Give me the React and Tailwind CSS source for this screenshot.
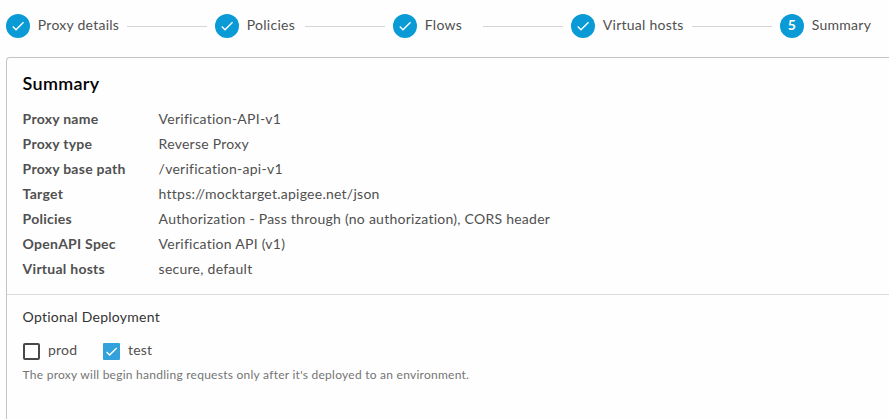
const steps = [
  { label: 'Proxy details', width: 'w-[209px]', done: true },
  { label: 'Policies', width: 'w-[178px]', done: true },
  { label: 'Flows', width: 'w-[178px]', done: true },
  { label: 'Virtual hosts', width: 'w-[209px]', done: true },
  { label: 'Summary', width: 'w-[109px]', done: false },
];

const rows = [
  ['Proxy name', 'Verification-API-v1'],
  ['Proxy type', 'Reverse Proxy'],
  ['Proxy base path', '/verification-api-v1'],
  ['Target', 'https://mocktarget.apigee.net/json'],
  ['Policies', 'Authorization - Pass through (no authorization), CORS header'],
  ['OpenAPI Spec', 'Verification API (v1)'],
  ['Virtual hosts', 'secure, default'],
];

function Check({ className }) {
  return (
    <svg className={className} viewBox="0 0 24 24" fill="#fff">
      <path d="M9 16.17L4.83 12l-1.42 1.41L9 19 21 7l-1.41-1.41z" />
    </svg>
  );
}

function Step({ step, index }) {
  return (
    <li className={`flex shrink-0 items-center ${step.width}`}>
      <span className="flex size-6 shrink-0 items-center justify-center rounded-full bg-[#0a9bd6] text-[14px] leading-6 font-bold text-white">
        {step.done ? <Check className="size-4" /> : <span className="-mt-0.5">{index + 1}</span>}
      </span>
      <span className="ml-[7.8px] -mt-0.5 whitespace-nowrap">{step.label}</span>
      {step.done && <span className="mr-2 ml-auto mt-px h-px w-20 bg-[#d6d6d6]" />}
    </li>
  );
}

function Checkbox({ label, checked }) {
  return (
    <label className="flex w-20 items-center">
      {checked ? (
        <span className="flex size-[17px] items-center justify-center rounded-[1px] bg-[#32a1dc]">
          <Check className="size-[15px]" />
        </span>
      ) : (
        <span className="size-[17px] rounded-[2px] border-2 border-[#484848]" />
      )}
      <span className="ml-[7.9px] -mt-[3px]">{label}</span>
    </label>
  );
}

export default function App() {
  return (
    <main className="flex h-[419px] w-[889px] flex-col overflow-hidden bg-[#fefefe] pl-1.5 font-['Lato',sans-serif] text-[14px] leading-[25px] tracking-[0.255px] text-[#505050]">
      <ol className="flex h-[57px] shrink-0 items-start pt-[13.5px]">
        {steps.map((step, i) => (
          <Step key={step.label} step={step} index={i} />
        ))}
      </ol>
      <section className="w-[900px] flex-1 rounded-tl-[4px] border-t border-l border-[#c4c4c4]">
        <div className="h-[237px] border-b border-[#dcdcdc] pt-[13px] pl-[15.6px]">
          <h1 className="h-[35px] text-[18px] leading-[25px] font-semibold tracking-[0.3px] text-black">Summary</h1>
          <dl className="grid grid-cols-[136px_1fr]">
            {rows.map(([name, value]) => (
              <div key={name} className="contents">
                <dt className="font-bold">{name}</dt>
                <dd>{value}</dd>
              </div>
            ))}
          </dl>
        </div>
        <div className="pt-[9px] pl-4">
          <h2 className="-ml-[0.4px] text-[#333]">Optional Deployment</h2>
          <div className="mt-[9px] flex h-[26px] items-center">
            <Checkbox label="prod" />
            <Checkbox label="test" checked />
          </div>
          <p className="-ml-[0.4px] mt-px text-[12px] leading-5 text-[#757575]">
            The proxy will begin handling requests only after it's deployed to an environment.
          </p>
        </div>
      </section>
    </main>
  );
}
